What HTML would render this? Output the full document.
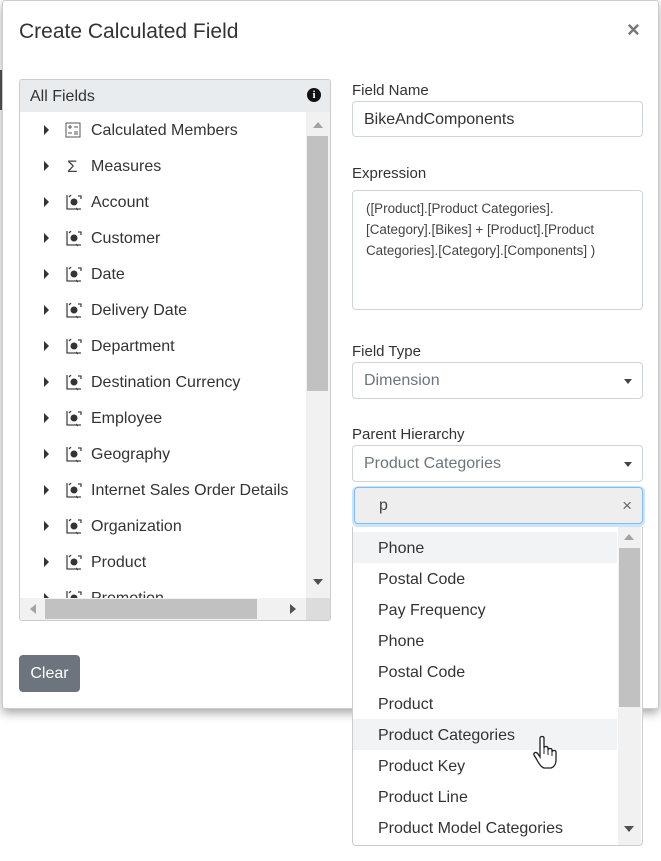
<!DOCTYPE html>
<html><head><style>
*{box-sizing:border-box;margin:0;padding:0}
body{width:661px;height:861px;background:#fff;font-family:"Liberation Sans",sans-serif;color:#333;position:relative;overflow:hidden}
.a{position:absolute}
.dlg{left:2px;top:0;width:657px;height:709px;background:#fff;border:1px solid #ccc;border-radius:3px;box-shadow:0 4px 10px rgba(0,0,0,.35)}
.row{position:absolute;left:0;height:36px;font-size:16px;line-height:38px;white-space:nowrap}
.tri{position:absolute;left:24px;top:13px;width:0;height:0;border-left:5px solid #333;border-top:5px solid transparent;border-bottom:5px solid transparent}
.lbl{font-size:15px;color:#333}
.inp{border:1px solid #ced4da;border-radius:4px;background:#fff;font-size:16px}
.li{position:absolute;left:0;width:264px;height:31px;line-height:33px;padding-left:25px;font-size:16px;color:#333}
.caret{position:absolute;right:10px;top:16px;border-top:5px solid #444;border-left:4px solid transparent;border-right:4px solid transparent}
</style></head><body>
<div class="a" style="left:0;top:70px;width:2px;height:40px;background:#555"></div>
<div class="a dlg"></div>
<div class="a" style="left:19px;top:20px;font-size:21px;color:#333">Create Calculated Field</div>
<div class="a" style="left:627px;top:17px;font-size:22px;color:#777;font-weight:bold">×</div>

<div class="a" style="left:19px;top:79px;width:312px;height:542px;border:1px solid #ccc;border-radius:3px;overflow:hidden;background:#fff">
 <div class="a" style="left:0;top:0;width:312px;height:32px;background:#e9ecef;font-size:16px;line-height:34px;padding-left:10px">All Fields</div>
 <div class="a" style="left:287px;top:8px;width:14px;height:14px;border-radius:50%;background:#111;color:#fff;font-size:11px;font-weight:bold;text-align:center;line-height:14px;font-family:'Liberation Serif',serif">i</div>
 <div class="a" style="left:0;top:32px;width:286px;height:486px;overflow:hidden">
  <div id="rows"></div>
 </div>
 <div class="a" style="left:286px;top:32px;width:24px;height:486px;background:#f1f1f1"></div>
 <div class="a" style="left:293px;top:42px;border-bottom:6px solid #a3a3a3;border-left:5px solid transparent;border-right:5px solid transparent"></div>
 <div class="a" style="left:287px;top:56px;width:21px;height:255px;background:#c1c1c1"></div>
 <div class="a" style="left:293px;top:499px;border-top:6px solid #505050;border-left:5px solid transparent;border-right:5px solid transparent"></div>
 <div class="a" style="left:0;top:518px;width:286px;height:22px;background:#f1f1f1"></div>
 <div class="a" style="left:10px;top:524px;border-right:6px solid #a3a3a3;border-top:5px solid transparent;border-bottom:5px solid transparent"></div>
 <div class="a" style="left:25px;top:519px;width:212px;height:20px;background:#c1c1c1"></div>
 <div class="a" style="left:270px;top:524px;border-left:6px solid #505050;border-top:5px solid transparent;border-bottom:5px solid transparent"></div>
 <div class="a" style="left:286px;top:518px;width:24px;height:22px;background:#dcdcdc"></div>
</div>

<div class="a" style="left:19px;top:655px;width:61px;height:37px;background:#6c757d;border-radius:4px;color:#fff;font-size:16px;line-height:38px;text-align:center">Clear</div>

<div class="a lbl" style="left:352px;top:82px">Field Name</div>
<div class="a inp" style="left:352px;top:101px;width:291px;height:36px;line-height:35px;padding-left:11px">BikeAndComponents</div>
<div class="a lbl" style="left:352px;top:165px">Expression</div>
<div class="a inp" style="left:352px;top:190px;width:291px;height:120px;font-size:13.4px;line-height:21px;padding:7px 10px 7px 13px;color:#444">([Product].[Product Categories].<br>[Category].[Bikes] + [Product].[Product<br>Categories].[Category].[Components] )</div>
<div class="a lbl" style="left:352px;top:343px">Field Type</div>
<div class="a inp" style="left:352px;top:362px;width:291px;height:37px;line-height:36px;padding-left:11px;color:#6c757d">Dimension<span class="caret"></span></div>
<div class="a lbl" style="left:352px;top:426px">Parent Hierarchy</div>
<div class="a inp" style="left:352px;top:445px;width:291px;height:37px;line-height:36px;padding-left:11px;color:#6c757d">Product Categories<span class="caret"></span></div>
<div class="a" style="left:354px;top:487px;width:289px;height:37px;background:#eee;border:1px solid #80bdff;border-radius:4px;box-shadow:0 1px 0 2px rgba(0,123,255,.2);font-size:16px;line-height:36px;padding-left:24px;color:#444">p<span style="position:absolute;right:10px;top:0;color:#666;font-size:17px">×</span></div>

<div class="a" style="left:352px;top:527px;width:291px;height:319px;background:#fff;border:1px solid #ccc;border-top:none;border-radius:0 0 4px 4px;overflow:hidden">
 <div id="list"></div>
 <div class="a" style="left:265px;top:0;width:23px;height:318px;background:#f1f1f1"></div>
 <div class="a" style="left:271px;top:7px;border-bottom:6px solid #a3a3a3;border-left:5px solid transparent;border-right:5px solid transparent"></div>
 <div class="a" style="left:266px;top:21px;width:21px;height:159px;background:#c1c1c1"></div>
 <div class="a" style="left:271px;top:299px;border-top:6px solid #505050;border-left:5px solid transparent;border-right:5px solid transparent"></div>
</div>
<svg class="a" style="left:533px;top:735px" width="28" height="36" viewBox="0 0 28 36"><path d="M7 3c0-2 4-2 4 0v10c0-2 4-2 4 0v2c0-2 4-2 4 0v2c0-2 4-2 4 0v8c0 4-2 7-5 8h-7c-3-1-5-4-7-8l-3-5c-1-2 2-4 4-1l2 3z" fill="#fff" stroke="#222" stroke-width="1.3"/><path d="M11 13v6M15 15v5M19 17v4" stroke="#222" stroke-width="1"/></svg>

<script>
var names=["Calculated Members","Measures","Account","Customer","Date","Delivery Date","Department","Destination Currency","Employee","Geography","Internet Sales Order Details","Organization","Product","Promotion"];
var h="";
names.forEach(function(n,i){
 var ic;
 if(i==0) ic='<svg class="a" style="left:45px;top:10px" width="16" height="16" viewBox="0 0 16 16"><rect x="1" y="1" width="14" height="14" fill="none" stroke="#555"/><path d="M3 5h4M5 3v4M9 5h4M3 11h4M9 10h4M9 12h4" stroke="#555"/></svg>';
 else if(i==1) ic='<span class="a" style="left:47px;top:0;font-size:17px;color:#444">Σ</span>';
 else ic='<svg class="a" style="left:45px;top:10px" width="17" height="17" viewBox="0 0 17 17"><path d="M2 1v14h14M4 3l2-2M11 14l2 2M13 2h3v3" stroke="#444" fill="none" stroke-width="1.3"/><circle cx="9" cy="8" r="3.5" fill="#333"/></svg>';
 h+='<div class="row" style="top:'+(i*36)+'px;width:300px"><span class="tri"></span>'+ic+'<span class="a" style="left:71px">'+n+'</span></div>';
});
document.getElementById("rows").innerHTML=h;
var L=["Phone","Postal Code","Pay Frequency","Phone","Postal Code","Product","Product Categories","Product Key","Product Line","Product Model Categories"];
var g="";
L.forEach(function(n,i){
 var bg=(i==0||i==6)?"background:#f2f3f5;":"";
 g+='<div class="li" style="top:'+(5+i*31.1)+'px;'+bg+'">'+n+'</div>';
});
document.getElementById("list").innerHTML=g;
</script>
</body></html>
